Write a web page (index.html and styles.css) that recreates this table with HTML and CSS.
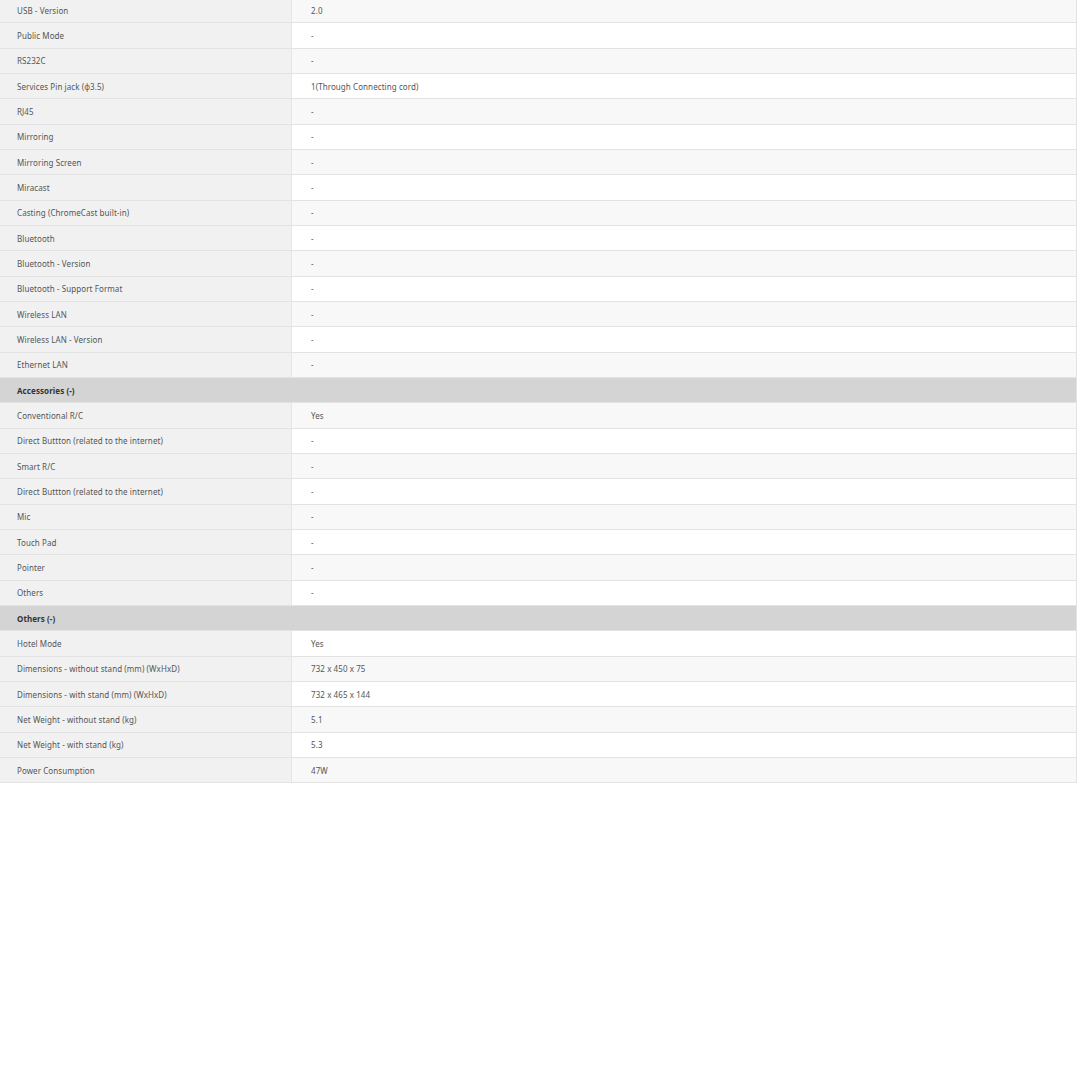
FILE: index.html
```html
<!DOCTYPE html>
<html lang="en">

<head>
    <meta name="viewport" content="width=device-width, initial-scale=1">
    <meta charset="utf-8">
    <link rel="stylesheet" href="styles.css">
</head>

<body>
    <div class="specs">
        <table>
            <tbody>
                <tr><th>USB - Version</th><td>2.0</td></tr>
                <tr><th>Public Mode</th><td>-</td></tr>
                <tr><th>RS232C</th><td>-</td></tr>
                <tr><th>Services Pin jack (ϕ3.5)</th><td>1(Through Connecting cord)</td></tr>
                <tr><th>RJ45</th><td>-</td></tr>
                <tr><th>Mirroring</th><td>-</td></tr>
                <tr><th>Mirroring Screen</th><td>-</td></tr>
                <tr><th>Miracast</th><td>-</td></tr>
                <tr><th>Casting (ChromeCast built-in)</th><td>-</td></tr>
                <tr><th>Bluetooth</th><td>-</td></tr>
                <tr><th>Bluetooth - Version</th><td>-</td></tr>
                <tr><th>Bluetooth - Support Format</th><td>-</td></tr>
                <tr><th>Wireless LAN</th><td>-</td></tr>
                <tr><th>Wireless LAN - Version</th><td>-</td></tr>
                <tr><th>Ethernet LAN</th><td>-</td></tr>
                <tr class="group"><th colspan="2">Accessories (-)</th></tr>
                <tr><th>Conventional R/C</th><td>Yes</td></tr>
                <tr><th>Direct Buttton (related to the internet)</th><td>-</td></tr>
                <tr><th>Smart R/C</th><td>-</td></tr>
                <tr><th>Direct Buttton (related to the internet)</th><td>-</td></tr>
                <tr><th>Mic</th><td>-</td></tr>
                <tr><th>Touch Pad</th><td>-</td></tr>
                <tr><th>Pointer</th><td>-</td></tr>
                <tr><th>Others</th><td>-</td></tr>
                <tr class="group"><th colspan="2">Others (-)</th></tr>
                <tr><th>Hotel Mode</th><td>Yes</td></tr>
                <tr><th>Dimensions - without stand (mm) (WxHxD)</th><td>732 x 450 x 75</td></tr>
                <tr><th>Dimensions - with stand (mm) (WxHxD)</th><td>732 x 465 x 144</td></tr>
                <tr><th>Net Weight - without stand (kg)</th><td>5.1</td></tr>
                <tr><th>Net Weight - with stand (kg)</th><td>5.3</td></tr>
                <tr><th>Power Consumption</th><td>47W</td></tr>
            </tbody>
        </table>
    </div>
</body>

</html>
```

FILE: styles.css
```css
body {
    margin: 0;
    background: #fff;
    font-family: "Noto Sans", "Open Sans", sans-serif;
}

div.specs {
    width: 1077px;
    margin-top: -2px;
}

table {
    border-collapse: collapse;
    width: 100%;
    border-right: 1px solid #e3e3e3;
}

th,
td {
    height: 24.34px;
    padding: 0;
    text-align: left;
    vertical-align: middle;
    font-size: 8px;
    font-weight: normal;
    letter-spacing: .01em;
    color: #555;
    border-bottom: 1px solid #e3e3e3;
}

th {
    width: 274px;
    padding-left: 17px;
    background-color: #f1f1f1;
}

td {
    padding-left: 19px;
    border-left: 1px solid #e6e6e6;
    background-color: #fff;
}

tr:nth-child(odd) td {
    background-color: #f8f8f8;
}

tr.group th {
    background-color: #d4d4d4;
    font-weight: bold;
    color: #333;
}
```
